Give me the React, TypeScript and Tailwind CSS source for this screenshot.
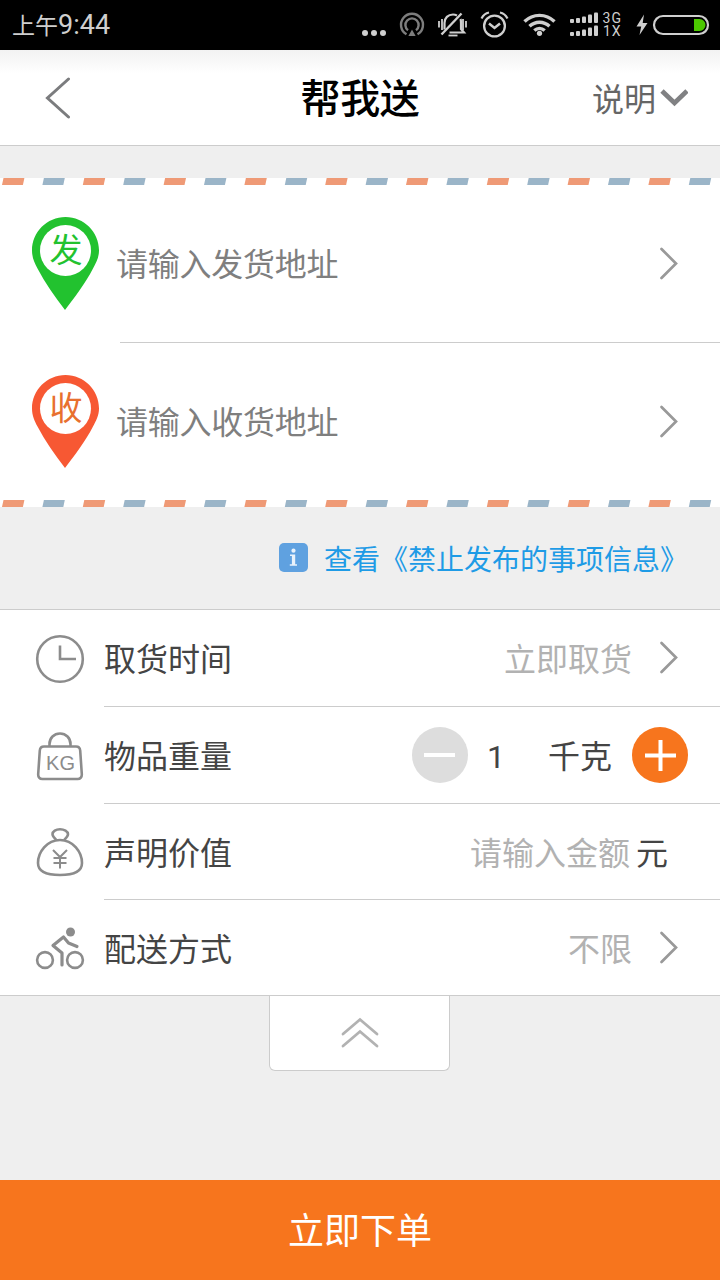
import { useState } from 'react';
import type { ReactNode } from 'react';

function StatusIcons() {
  return (
    <svg width="354" height="50" viewBox="360 0 354 50" fill="none" stroke="#cfcfcf">
      <g fill="#cfcfcf" stroke="none">
        <circle cx="365" cy="33" r="3" />
        <circle cx="374" cy="33" r="3" />
        <circle cx="383" cy="33" r="3" />
      </g>

      {/* hotspot */}
      <g stroke="#7d7d7d" strokeWidth="2.4">
        <path d="M406.5 34.3a11 11 0 1 1 11 0" />
        <path d="M408 30.2a6.6 6.6 0 1 1 8 0" />
        <path d="M412 29.5l3.6 6.5h-7.2z" fill="#7d7d7d" stroke="none" />
      </g>

      {/* muted bell */}
      <g strokeWidth="2.2">
        <path d="M444.5 29.5V23c0-5 3.5-8.500 8.500-8.500 1.600 0 2.800.4 4 1" />
        <path d="M460.5 19c.5 1.2.5 2.5.5 4v6l3 3.5h-14.5" />
        <path d="M441.5 34.5l20-21" strokeWidth="2.4" />
        <path d="M448.5 35.500h9" strokeWidth="1.8" />
        <path d="M439 21v6.5M442 19v11M463 19v11M466 21v6.5" strokeWidth="1.8" />
      </g>

      {/* alarm */}
      <circle cx="494.5" cy="26" r="10.400" strokeWidth="2.3" />
      <path d="M489 23.500l5.500 4.500 5.500-4.500" strokeWidth="2.5" />
      <path d="M481.5 18.5c1.500-3 4-5.300 7.500-6M507.5 18.5c-1.500-3-4-5.300-7.500-6" strokeWidth="2.2" />

      {/* wifi */}
      <g strokeWidth="3.4">
        <path d="M524.5 21.5c8.500-8.200 21.500-8.200 30 0" />
        <path d="M529.5 26.3c5.800-5.400 14.200-5.400 20 0" />
        <path d="M534.3 30.6c3.200-2.900 7.200-2.900 10.400 0" />
        <circle cx="539.5" cy="33.3" r="2.6" fill="#cfcfcf" stroke="none" />
      </g>

      {/* two sim signal levels */}
      <g fill="#cfcfcf" stroke="none">
        {[0, 13].map((dy) => (
          <g key={dy}>
            <rect x="570" y={19 + dy} width="4" height="4" rx="1" />
            <rect x="576" y={18 + dy} width="4" height="5" rx="1" />
            <rect x="582" y={16.5 + dy} width="4" height="6.5" rx="1" />
            <rect x="588" y={14.5 + dy} width="4" height="8.5" rx="1" />
            <rect x="594" y={12.5 + dy} width="4" height="10.5" rx="1" />
          </g>
        ))}
      </g>
      <g fill="#cfcfcf" stroke="none" className="font-['Roboto',sans-serif] text-[14px]">
        <text x="602.5" y="23" textLength="18.5">3G</text>
        <text x="603" y="36" textLength="17.5">1X</text>
      </g>

      {/* battery */}
      <path d="M644 14.5l-7.500 12h4.700l-1.700 8.500 8-12h-4.800z" fill="#cfcfcf" stroke="none" />
      <rect x="654" y="16" width="54" height="18" rx="9" strokeWidth="2.200" />
      <path d="M694 19h5.500a6 6 0 0 1 0 12H694z" fill="#4cc800" stroke="none" />
    </svg>
  );
}

function StatusBar() {
  return (
    <div className="flex h-[50px] shrink-0 items-center justify-between bg-black pr-[6px] pl-3 text-[#cfcfcf]">
      <div className="flex items-baseline">
        <span className="text-[23px]">上午</span>
        <span className="text-[27px]">9:44</span>
      </div>
      <StatusIcons />
    </div>
  );
}

// airmail envelope edge
function AirmailEdge() {
  return (
    <svg width="720" height="7" className="block">
      {Array.from({ length: 18 }, (_, i) => {
        const x = 2 + i * 40.4;
        return (
          <polygon
            key={i}
            points={`${x + 1.5},0 ${x + 22.4},0 ${x + 20.9},7 ${x},7`}
            fill={i % 2 === 0 ? '#ef9a76' : '#9bb5c8'}
          />
        );
      })}
    </svg>
  );
}

function ChevronRight() {
  return (
    <svg width="20" height="34" viewBox="0 0 20 34" fill="none" stroke="#999" strokeWidth="2.7" strokeLinecap="round">
      <path d="M2.5 2L17 16.5 2.5 31" />
    </svg>
  );
}

function Pin({ label, color, textColor }: { label: string; color: string; textColor: string }) {
  return (
    <svg width="68" height="94" viewBox="0 0 68 94">
      <path d="M33.5 0C15 0 0 15 0 33.5c0 7 2.5 12.5 5.5 18C13 66 23 80 33 93c10-13 20.500-27 28-41.500 3-5.500 6-11 6-18C67 15 52 0 33.500 0z" fill={color} />
      <circle cx="33.5" cy="33.5" r="25.5" fill="#fff" />
      <text x="34" y="45" textAnchor="middle" fill={textColor} className="text-[33px]">
        {label}
      </text>
    </svg>
  );
}

function ClockIcon() {
  return (
    <svg width="50" height="50" viewBox="0 0 50 50" fill="none" stroke="#8c8c8c" strokeWidth="2.6">
      <circle cx="25" cy="25" r="22.8" />
      <path d="M25 11.5V25h16" />
    </svg>
  );
}

function WeightIcon() {
  return (
    <svg width="50" height="50" viewBox="0 0 50 50" fill="none" stroke="#8c8c8c" strokeWidth="2.6">
      <path d="M9 15.500h32c2.500 0 4 1.500 4.200 4l1.600 23.500c.2 3-1.300 5-4.300 5h-35c-3 0-4.500-2-4.300-5l1.600-23.500c.2-2.500 1.700-4 4.200-4z" />
      <path d="M14.5 15v-2c0-6 4.500-10.500 10.500-10.500S35.500 7 35.500 13v2" />
      <text x="25.500" y="38.5" textAnchor="middle" fill="#8c8c8c" stroke="none" className="font-['Liberation_Sans',sans-serif] text-[20px]">
        KG
      </text>
    </svg>
  );
}

function MoneyBagIcon() {
  return (
    <svg width="50" height="50" viewBox="0 0 50 50" fill="none" stroke="#8c8c8c" strokeWidth="2.6">
      <path d="M25 13C12 13 3 25 3 36c0 9 8 12 22 12s22-3 22-12c0-11-9-23-22-23z" />
      <path d="M21.5 13c-1.500-1.500-4-3.500-4-5.800 0-3 3.500-5 7.500-5s8 2 8 5c0 2.300-2.500 4.300-4 5.800" />
      <path d="M18 23l7 7 7-7M25 30v11.500M18.500 31h13M18.500 36h13" strokeWidth="2" />
    </svg>
  );
}

function CyclistIcon() {
  return (
    <svg width="50" height="50" viewBox="0 0 50 50" fill="none" stroke="#8c8c8c" strokeWidth="2.6">
      <circle cx="10" cy="37" r="7.900" />
      <circle cx="40" cy="37" r="7.900" />
      <circle cx="35.500" cy="9" r="4.500" fill="#8c8c8c" stroke="none" />
      <path d="M42 23.500l-8.500-3.500-5-6-10.500 8.500 9 7.500v12" strokeWidth="3.2" strokeLinecap="round" strokeLinejoin="round" />
    </svg>
  );
}

function AddressRow({ placeholder, children }: { placeholder: string; children: ReactNode }) {
  return (
    <div className="flex flex-1 items-center pr-[41px] pl-8">
      {children}
      <span className="ml-4 flex-1 pt-[3px] tracking-[-0.25px] text-[#7f7f7f]">{placeholder}</span>
      <ChevronRight />
    </div>
  );
}

interface OptionRowProps {
  icon: ReactNode;
  label: string;
  className: string;
  children: ReactNode;
}

function OptionRow({ icon, label, className, children }: OptionRowProps) {
  return (
    <div className="flex pl-[35px]">
      <div className="flex w-[69px] items-center">{icon}</div>
      <div className={`flex flex-1 items-center border-[#ccc] ${className}`}>
        <span className="flex-1 pt-1">{label}</span>
        {children}
      </div>
    </div>
  );
}

export default function App() {
  const [weight, setWeight] = useState(1);

  return (
    <div className="flex h-[1280px] w-[720px] flex-col overflow-hidden bg-[#efefef] font-['Roboto','Noto_Sans_CJK_SC',sans-serif] text-[32px] leading-none text-[#444]">
      <StatusBar />

      <header className="grid h-24 shrink-0 grid-cols-[1fr_auto_1fr] items-center border-b border-[#ccc] bg-white bg-linear-to-b from-[#f2f2f2] to-white to-25% px-8">
        <svg width="26" height="42" viewBox="0 0 26 42" fill="none" stroke="#7b7c7e" strokeWidth="3" strokeLinecap="round" className="ml-[13px]">
          <path d="M23.500 2L2.500 21l21 19" />
        </svg>
        <h1 className="pt-[5px] text-[40px] font-medium tracking-[-0.3px] text-black">帮我送</h1>
        <div className="flex items-center justify-end text-[#666]">
          <span className="pt-1">说明</span>
          <svg width="32" height="20" viewBox="0 0 32 20" fill="none" stroke="#808183" strokeWidth="4.8">
            <path d="M6 3l12.500 12L31 3" />
          </svg>
        </div>
      </header>

      <section className="mt-8 flex h-[329px] shrink-0 flex-col bg-white">
        <AirmailEdge />
        <AddressRow placeholder="请输入发货地址">
          <Pin label="发" color="#22c22f" textColor="#22c22f" />
        </AddressRow>
        <div className="ml-[120px] h-px bg-[#ccc]" />
        <AddressRow placeholder="请输入收货地址">
          <Pin label="收" color="#f75833" textColor="#e8702f" />
        </AddressRow>
        <AirmailEdge />
      </section>

      <div className="flex h-[102px] shrink-0 items-center justify-end pr-8 text-[28px] text-[#1e9be6]">
        <svg width="29" height="29" viewBox="0 0 29 29" className="mr-4 mb-[2px]">
          <rect width="29" height="29" rx="5" fill="#5fa1e0" />
          <circle cx="14.5" cy="7.7" r="2.1" fill="#e9f2fb" />
          <path d="M11 11.500h5.200V21.200H18v1.500h-7.200v-1.500h2.100v-8.200H11z" fill="#e9f2fb" />
        </svg>
        <span className="pt-[5px]">查看《禁止发布的事项信息》</span>
      </div>

      <section className="shrink-0 border-y border-[#ccc] bg-white">
        <OptionRow icon={<ClockIcon />} label="取货时间" className="h-[97px] border-b">
          <span className="mr-[27px] pt-1 text-[#b2b2b2]">立即取货</span>
          <div className="pr-[41px]">
            <ChevronRight />
          </div>
        </OptionRow>
        <OptionRow icon={<WeightIcon />} label="物品重量" className="h-[97px] border-b">
          <button
            aria-label="减少"
            onClick={() => setWeight(Math.max(1, weight - 1))}
            className="flex size-14 items-center justify-center rounded-full bg-[#ddd]"
          >
            <span className="h-1 w-[31px] bg-white" />
          </button>
          <span className="w-14 pt-[3px] text-center">{weight}</span>
          <span className="mr-5 ml-6 pt-1">千克</span>
          <button
            aria-label="增加"
            onClick={() => setWeight(weight + 1)}
            className="mr-8 flex size-14 items-center justify-center rounded-full bg-[#f7751d]"
          >
            <svg width="31" height="31" stroke="#fff" strokeWidth="4">
              <path d="M0 15.500h31M15.500 0v31" />
            </svg>
          </button>
        </OptionRow>
        <OptionRow icon={<MoneyBagIcon />} label="声明价值" className="h-24 border-b">
          <span className="pt-1 text-[#b2b2b2]">请输入金额</span>
          <span className="mr-[52px] ml-[6px] pt-1">元</span>
        </OptionRow>
        <OptionRow icon={<CyclistIcon />} label="配送方式" className="h-[95px]">
          <span className="mr-[27px] pt-1 text-[#b2b2b2]">不限</span>
          <div className="pr-[41px]">
            <ChevronRight />
          </div>
        </OptionRow>
      </section>

      <button aria-label="收起" className="ml-[269px] flex h-[75px] w-[181px] shrink-0 items-center justify-center rounded-b-md border border-t-0 border-[#ccc] bg-white">
        <svg width="38" height="32" viewBox="0 0 38 32" fill="none" stroke="#b2b2b2" strokeWidth="2.8" strokeLinecap="round">
          <path d="M2 17L19 2.500 36 17M2 29L19 14.500 36 29" />
        </svg>
      </button>

      <button className="mt-auto flex h-[100px] shrink-0 items-center justify-center bg-[#f7751d] pt-1 text-[36px] text-white">
        立即下单
      </button>
    </div>
  );
}
